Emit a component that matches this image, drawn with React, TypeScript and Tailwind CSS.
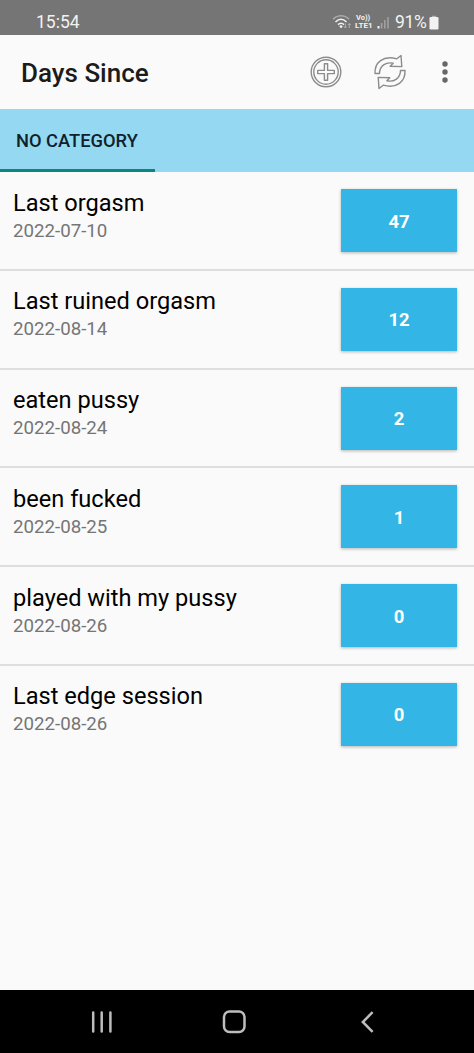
interface Entry {
  title: string;
  date: string;
  days: number;
}

const entries: Entry[] = [
  { title: 'Last orgasm', date: '2022-07-10', days: 47 },
  { title: 'Last ruined orgasm', date: '2022-08-14', days: 12 },
  { title: 'eaten pussy', date: '2022-08-24', days: 2 },
  { title: 'been fucked', date: '2022-08-25', days: 1 },
  { title: 'played with my pussy', date: '2022-08-26', days: 0 },
  { title: 'Last edge session', date: '2022-08-26', days: 0 },
];

function WifiIcon() {
  return (
    <svg width="20" height="16" viewBox="0 0 20 16" fill="none" strokeWidth="1.6">
      <path d="M1 5.2C5.5.6 12.5.6 17 5.2" stroke="#a9a9a9" />
      <path d="M3.5 8C7 4.5 11 4.5 14.5 8" stroke="#f2f2f2" />
      <path d="M6 10.6c2-1.8 4-1.8 6 0" stroke="#f2f2f2" />
      <circle cx="9" cy="12.6" r="1.4" fill="#f2f2f2" />
      <path d="M13.3 9.5v4.5m-1.5-1.5 1.5 1.5 1.5-1.5M17.3 14V9.5M15.8 11l1.5-1.5 1.5 1.5" stroke="#b0b0b0" strokeWidth="1" />
    </svg>
  );
}

function SignalIcon() {
  return (
    <svg width="13" height="13" viewBox="0 0 13 13">
      <rect x="0.5" y="10" width="2" height="2.5" fill="#f2f2f2" />
      <rect x="3.8" y="7" width="1.6" height="5.5" fill="#a0a0a0" />
      <rect x="7" y="4" width="1.6" height="8.5" fill="#a0a0a0" />
      <rect x="10.2" y="1" width="1.6" height="11.5" fill="#a0a0a0" />
    </svg>
  );
}

function StatusBar() {
  return (
    <div className="flex h-[35px] shrink-0 items-center bg-[#757575] pt-2 pr-[35px] pl-9 text-[#f2f2f2]">
      <span className="text-[17.5px] leading-[26px]">15:54</span>
      <div className="ml-auto flex items-center">
        <WifiIcon />
        <div className="ml-[3px] flex w-[20px] flex-col text-[8px] leading-[8px] font-bold">
          <span className="pl-px text-[7.5px]">Vo))</span>
          <span>LTE1</span>
        </div>
        <div className="ml-[2px] pt-px">
          <SignalIcon />
        </div>
        <span className="ml-[5px] w-[34px] text-[17.5px] leading-[26px] tracking-[-0.3px]">91%</span>
        <svg className="mt-0.5" width="10" height="15" viewBox="0 0 10 15">
          <path d="M3 .8h4v2H3z" fill="#b5b5b5" />
          <rect x="0.5" y="2" width="9" height="12.5" rx="1.3" fill="#f2f2f2" />
        </svg>
      </div>
    </div>
  );
}

function AddIcon() {
  return (
    <svg width="34" height="34" viewBox="0 0 34 34" fill="none" stroke="#8c8c8c" strokeWidth="1.4">
      <circle cx="17" cy="17" r="14.8" />
      <circle cx="17" cy="17" r="12.2" />
      <path d="M15.4 8.7h3.2v6.7h6.7v3.2h-6.7v6.7h-3.2v-6.7H8.7v-3.2h6.7z" strokeLinejoin="round" />
    </svg>
  );
}

function RefreshIcon() {
  return (
    <svg width="34" height="36" viewBox="0 0 34 36" fill="none" stroke="#8c8c8c" strokeWidth="1.4" strokeLinejoin="round">
      <path d="M2 19.5C1.5 8.5 10 1 23.8 4.8L28 1.5 28.8 12.6 17.2 12.2 20.2 9.2C12.8 7.6 6.6 12 6.5 19.5Z" />
      <path d="M32 16.5C32.5 27.5 24 35 10.2 31.2L6 34.5 5.2 23.4 16.8 23.8 13.8 26.8C21.2 28.4 27.4 24 27.5 16.5Z" />
    </svg>
  );
}

function AppBar() {
  return (
    <header className="flex h-[74px] shrink-0 items-center bg-[#fafafa] pr-[26px] pl-[21px]">
      <h1 className="pt-0.5 text-[26px] leading-8 font-medium text-[#1b1b1b]">Days Since</h1>
      <button className="ml-auto">
        <AddIcon />
      </button>
      <button className="ml-[30px]">
        <RefreshIcon />
      </button>
      <button className="ml-[35px]">
        <svg width="6" height="24" viewBox="0 0 6 24" fill="#676767">
          <circle cx="3" cy="4" r="2.7" />
          <circle cx="3" cy="12" r="2.7" />
          <circle cx="3" cy="20" r="2.7" />
        </svg>
      </button>
    </header>
  );
}

function EntryRow({ entry }: { entry: Entry }) {
  return (
    <li className="flex h-[98.75px] items-start justify-between border-b-2 border-[#dedede] pt-[17px] pr-[17px] pl-[13px] last:border-transparent">
      <div className="flex flex-col pt-[0.6px]">
        <span className="text-[23.6px] leading-[27px] text-black">{entry.title}</span>
        <span className="text-[18.7px] leading-7 text-[#757575]">{entry.date}</span>
      </div>
      <button className="h-[63px] w-[116px] bg-[#33b5e5] pt-1 text-[18.5px] font-bold text-white shadow-[0_1px_3px_rgba(0,0,0,0.28)]">
        {entry.days}
      </button>
    </li>
  );
}

function NavBar() {
  return (
    <nav className="flex h-[63px] shrink-0 items-center bg-black pl-[91px]">
      <svg width="22" height="22" viewBox="0 0 22 22" stroke="#bdbdbd" strokeWidth="2.5" strokeLinecap="round">
        <path d="M2.2 1.5v19M10.7 1.5v19M19.4 1.5v19" />
      </svg>
      <svg className="ml-[109px]" width="24" height="24" viewBox="0 0 24 24" fill="none" stroke="#bdbdbd" strokeWidth="2.5">
        <rect x="2" y="1.5" width="20.5" height="20.5" rx="5.5" />
      </svg>
      <svg className="ml-[114px]" width="14" height="22" viewBox="0 0 14 22" fill="none" stroke="#bdbdbd" strokeWidth="2.5">
        <path d="M12.6 1.2 2.8 11l9.8 9.8" />
      </svg>
    </nav>
  );
}

export default function App() {
  return (
    <div className="flex h-[1053px] w-[474px] flex-col overflow-hidden bg-[#fafafa] font-['Roboto',sans-serif]">
      <StatusBar />
      <AppBar />
      <div className="flex h-[63px] shrink-0 bg-[#94d8f2]">
        <div className="flex w-[155px] items-center border-b-[3px] border-[#0b877d] pt-1 pl-4 text-[18.3px] font-medium text-[#10212a]">
          NO CATEGORY
        </div>
      </div>
      <ul className="flex-1">
        {entries.map((entry) => (
          <EntryRow key={entry.title} entry={entry} />
        ))}
      </ul>
      <NavBar />
    </div>
  );
}
